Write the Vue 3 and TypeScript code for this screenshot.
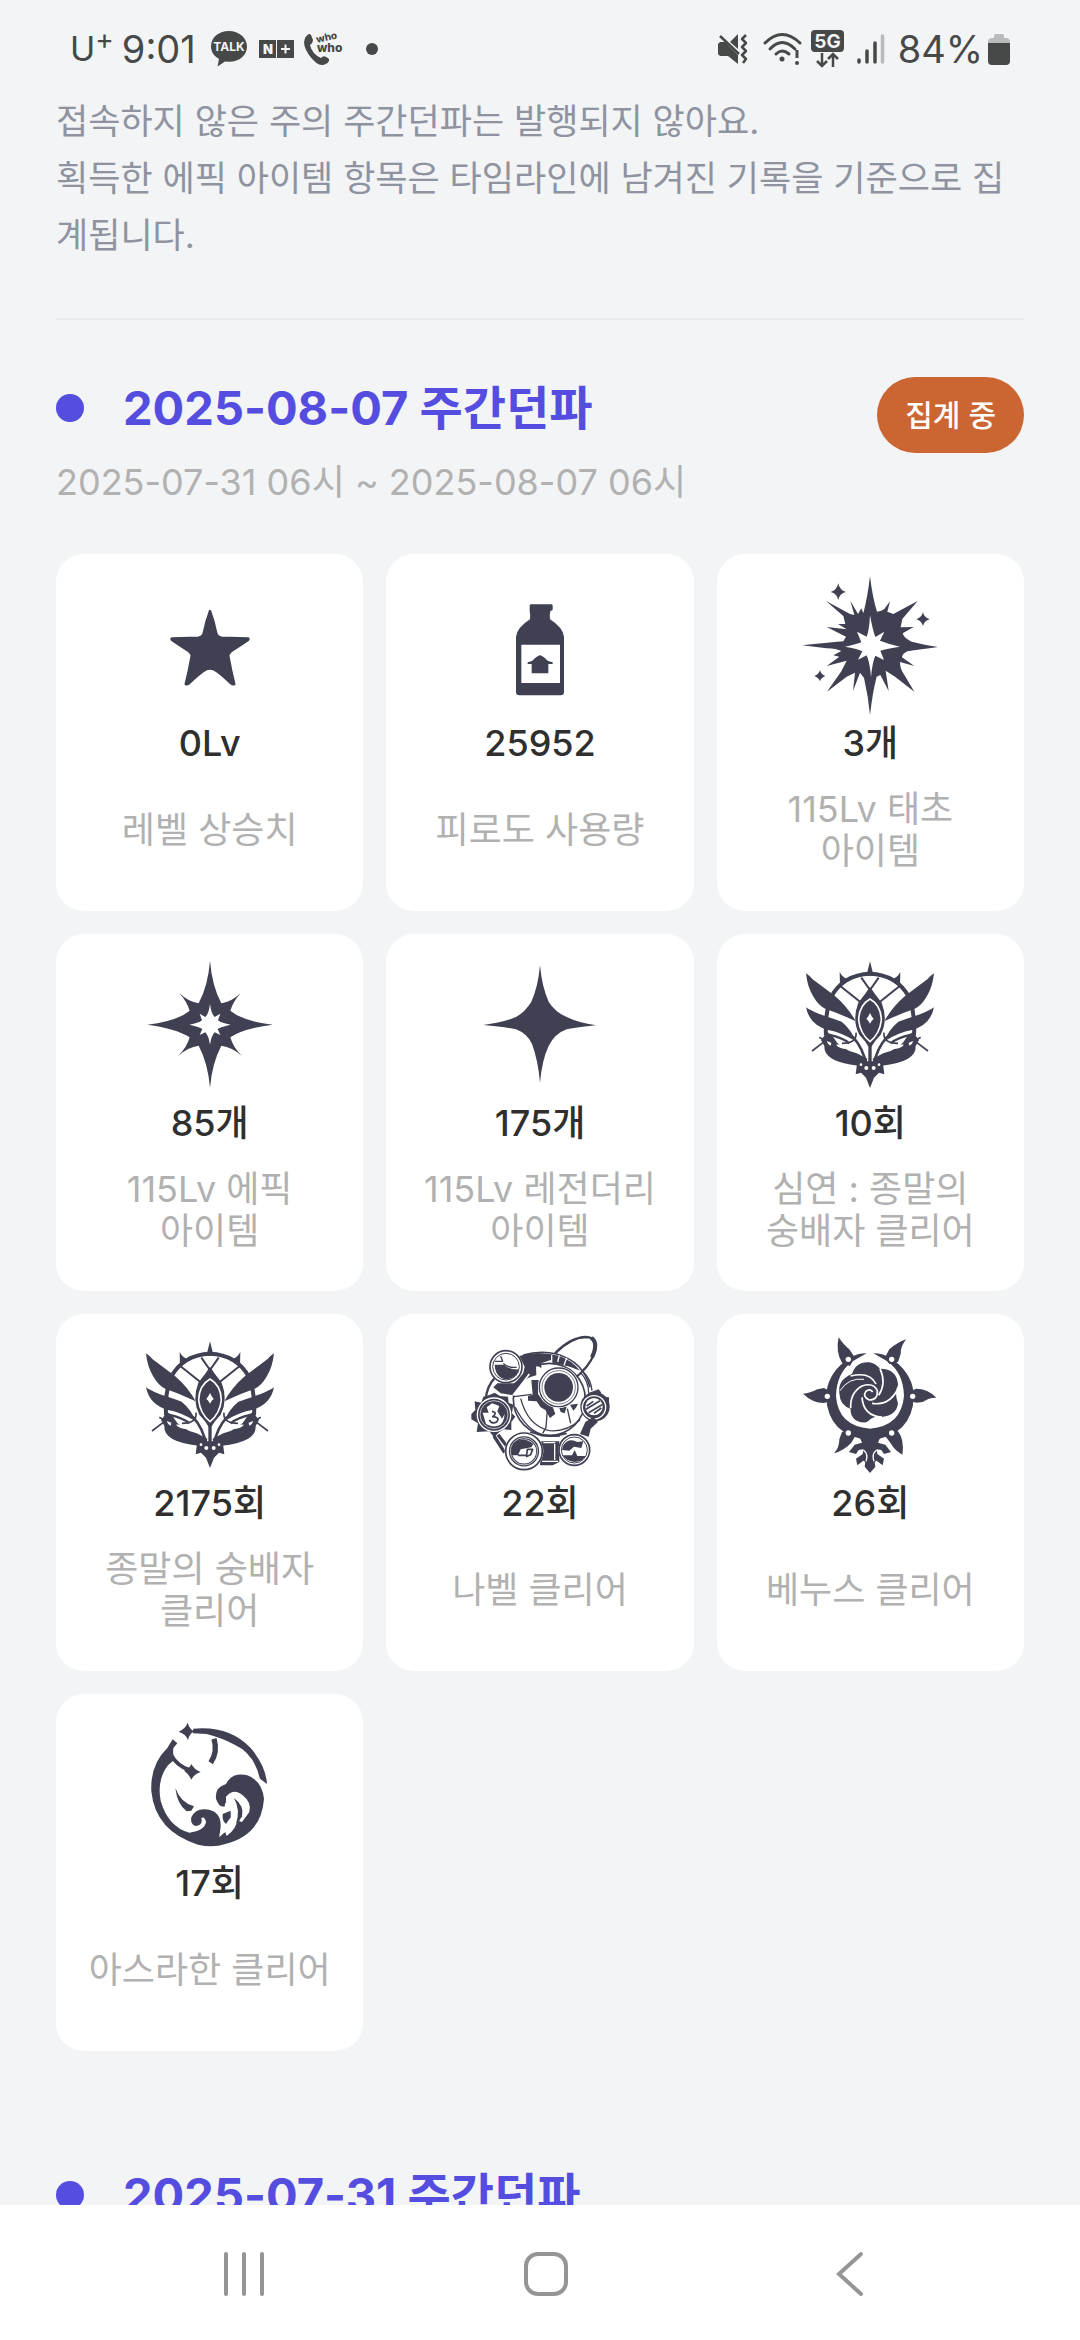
<script setup lang="ts">
interface Shape {
  d: string
  /** 'ink' fills dark, 'paper' fills white; strokes use the same two colours */
  fill?: 'ink' | 'paper'
  stroke?: 'ink' | 'paper'
  width?: number
  /** also draw the shape reflected over the vertical centre line */
  mirror?: boolean
}

interface Stat {
  value: string
  label: string[]
  icon: Shape[]
}

const circle = (x: number, y: number, r: number): string =>
  `M${x - r} ${y}a${r} ${r} 0 1 0 ${2 * r} 0a${r} ${r} 0 1 0 ${-2 * r} 0Z`

const ink = (d: string, mirror = false): Shape => ({ d, fill: 'ink', mirror })
const paper = (d: string, mirror = false): Shape => ({ d, fill: 'paper', mirror })
const line = (d: string, width: number, mirror = false): Shape => ({ d, stroke: 'ink', width, mirror })
const cut = (d: string, width: number, mirror = false): Shape => ({ d, stroke: 'paper', width, mirror })

const levelStar: Shape[] = [
  {
    d: 'M510 213Q522 245 528 276Q530 291 545 293L624 295Q628 297 623 301Q598 318 573 334Q563 342 566 352Q573 392 583 432Q579 435 573 430Q548 406 530 393Q510 379 490 393Q472 406 447 430Q441 435 437 432Q447 392 454 352Q457 342 447 334Q422 318 397 301Q392 297 396 295L475 293Q490 291 492 276Q498 245 510 213Z',
    fill: 'ink', stroke: 'ink', width: 7,
  },
]

const bottle: Shape[] = [
  ink('M479 197Q479 193 484 193H543Q548 193 548 197V209L541 214Q538 226 540 238Q578 262 582 290V456Q582 466 572 466H448Q438 466 438 456V290Q442 262 480 238Q482 226 479 214Z'),
  paper('M454 314H570V429H454Z'),
  ink('M510 345L522 352L534 363L548 367V372H535V400H485V372H473V367L486 363L498 352Z'),
]

const primeval: Shape[] = [
  ink('M510 108Q517 170 531 215Q545 214 553 207L570 184L562 215L580 222L653 183L607 237L602 262L641 261L608 280Q612 295 635 305Q675 315 714 321Q660 328 622 334Q606 342 606 352L643 378L600 366Q600 385 610 400L643 455L585 410L557 392L566 453L541 405L530 410Q518 455 510 525Q505 470 492 414L480 398L459 453L465 398L440 410L381 455L424 394L440 362L380 378L418 350L400 346L424 333Q410 326 380 325L306 316Q380 308 430 304L438 290L380 261L440 268L414 252L436 252L430 228L378 183L450 222L463 225L451 182L474 222L484 205L490 220Q503 170 510 108Z'),
  paper('M510 226Q518 270 526 291L553 275L540 302Q565 312 600 320Q560 326 541 332L552 360L526 347Q517 365 513 412Q510 370 500 346L474 359L487 334Q470 325 435 320Q470 313 484 307L471 275L500 290Q508 270 510 226Z'),
  ink('M415 130Q418 150 438 156Q418 161 415 180Q411 161 392 156Q411 150 415 130Z'),
  ink('M669 217Q672 232 689 238Q672 243 669 258Q665 243 649 238Q665 232 669 217Z'),
  ink('M360 391Q363 403 376 408Q363 413 360 424Q356 413 343 408Q356 403 360 391Z'),
]

const epic: Shape[] = [
  ink('M510 122Q516 197 544 250Q577 244 602 219Q578 247 571 272Q610 304 698 314Q610 326 571 352Q580 384 606 408Q576 381 544 377Q516 430 510 503Q504 430 476 377Q444 381 414 408Q440 384 449 352Q410 326 322 314Q410 304 449 272Q442 247 418 219Q443 244 476 250Q504 197 510 122Z'),
  paper('M510 251Q513 280 524 291L541 281L534 301Q545 310 572 314Q546 319 533 327L541 345L524 337Q514 347 510 374Q506 347 496 337L479 345L487 327Q474 319 448 314Q475 310 486 301L479 281L496 291Q507 280 510 251Z'),
]

const legendary: Shape[] = [
  ink('M510 136Q516 202 536 245Q554 275 590 291Q625 308 678 316Q620 322 590 328Q554 341 536 378Q516 420 510 488Q504 420 486 372Q472 341 438 328Q400 320 340 315Q400 308 438 291Q466 275 484 245Q504 202 510 136Z'),
]

const cultist: Shape[] = [
  line('M510 161Q590 164 627 231Q646 280 642 346', 12, true),
  ink('M510 124L521 167H499Z'),
  ink('M601 156L600 198L573 179Q592 174 601 156Z', true),
  line('M510 210L536 173', 6, true),
  line('M540 245L602 196', 6, true),
  ink('M702 160Q694 165 682 178L616 227Q575 262 553 304Q600 281 644 266Q664 258 681 228Q698 200 702 160Z', true),
  ink('M702 262Q692 270 660 283Q620 296 595 305Q565 330 553 364Q596 337 636 330Q692 314 702 262Z', true),
  ink('M510 200Q524 222 545 248Q565 300 542 344Q524 362 510 386Q496 362 478 344Q455 300 475 248Q496 222 510 200Z'),
  cut('M510 237Q543 256 544 300Q540 340 510 365Q480 340 476 300Q477 256 510 237Z', 5),
  paper('M510 279Q515 290 521 297Q515 301 510 311Q505 301 499 297Q505 290 510 279Z'),
  line('M552 338Q548 370 594 370', 5, true),
  line('M562 350Q530 385 521 436', 8, true),
  line('M510 375V430', 10),
  line('M572 370Q590 354 634 344', 7, true),
  ink('M638 336L657 360L647 378Q650 426 545 437L521 432L518 416L550 400Q602 387 620 352Z', true),
  paper('M576 387Q600 370 612 374Q600 388 576 387Z', true),
  paper('M626 368L640 363Q637 374 628 377Z', true),
  line('M640 365L662 352M646 364L684 393', 5, true),
  ink('M472 424H548L553 463L537 458L522 473L510 504L498 473L483 458L467 463Z'),
  paper(circle(521, 444, 6), true),
  paper(circle(537, 434, 4), true),
]

const nabel: Shape[] = [
  line('M555 160Q602 112 648 111Q688 113 674 158Q656 204 610 238', 7),
  line('M664 114Q686 128 666 172', 12),
  line('M460 165Q510 150 560 162Q640 185 660 262', 5),
  line('M376 232Q350 258 347 300', 7),
  ink('M448 168Q500 150 566 167Q605 180 630 212L600 200L548 188L542 180L514 190V204L498 196L499 226Q472 231 456 250L430 286L392 280L370 262L382 250H432L458 228L464 200Z'),
  cut('M568 166L563 186M590 173L582 196M545 166V185', 4),
  line(circle(538, 298, 108), 5),
  cut('M478 222Q450 260 430 284H520', 5),
  paper('M452 272Q460 240 486 234L484 282L440 286Z'),
  line('M452 296Q474 378 538 392Q590 396 630 360', 4),
  line('M432 290L485 283M436 322Q468 388 516 404', 4),
  line('M532 330L528 382L518 400M592 326L602 370', 4),
  ink('M484 240H506L504 282L520 303L548 320L556 342L540 354L526 330L512 322L500 304L474 302V288L488 284Z'),
  ink('M566 318L590 320L584 340L572 336ZM600 314L624 311L618 323L610 332Z'),
  paper(circle(566, 262, 62)),
  line(circle(566, 262, 58), 4),
  line(circle(566, 262, 50), 2),
  ink(circle(566, 262, 43)),
  line('M632 218Q656 244 656 280M640 216Q662 236 666 272', 4),
  ink(circle(675, 320, 44)),
  ink('M654 280L686 268L694 278L668 292ZM700 290L717 292V330L706 342Z'),
  cut(circle(672, 322, 35), 4),
  paper(circle(672, 320, 26)),
  line('M650 318L670 304M648 328L690 302M656 338L696 314M672 340L694 324', 5),
  ink('M670 350L684 366L662 386L656 410L630 402L646 366Z'),
  ink('M514 424H568V486L548 496H510Z'),
  cut('M516 484H564M554 432V480M520 428H556', 4),
  line('M500 402Q530 416 590 400M480 396Q520 410 570 408', 5),
  ink('M356 286L374 278L390 288L414 290L416 308L430 314L426 340L436 350L424 366V390L402 388L388 396L372 412L358 394L320 396L324 370L304 358V342L316 330L314 304L334 308L340 290Z'),
  cut(circle(372, 344, 50), 4),
  cut(circle(372, 344, 42), 2),
  paper('M338 338L356 338L350 322L366 310L388 318L382 334L396 356L404 342Q402 368 388 376Q368 384 348 372Z'),
  line('M366 334Q384 338 368 350Q392 352 380 366Q366 374 358 360', 5),
  line('M372 408L404 458M384 404L410 438', 10),
  paper(circle(408, 200, 50)),
  line(circle(408, 200, 48), 5),
  line(circle(408, 200, 40), 3),
  ink('M374 194H402Q420 210 446 208Q442 234 410 238Q376 234 374 194Z'),
  line('M374 184H398L392 168M400 190Q412 204 440 202', 4),
  paper(circle(462, 454, 58)),
  line(circle(462, 454, 55), 5),
  line(circle(462, 454, 41), 9),
  cut(circle(462, 454, 41), 2),
  ink('M430 430Q460 406 490 432L484 442L452 448L444 466H426Q420 446 430 430Z'),
  line('M444 466H470L472 448H488L482 464L468 470', 5),
  paper(circle(613, 450, 48)),
  line(circle(613, 450, 46), 5),
  line(circle(613, 450, 39), 3),
  ink('M580 436Q596 412 622 426L640 424L634 444L612 440L598 452L576 450ZM578 466H606L614 450L622 468H646Q640 484 614 486Q590 484 578 466Z'),
]

const venus: Shape[] = [
  ink('M500 160Q470 160 455 172L432 186Q382 226 378 288Q384 410 510 420Q636 410 642 288Q638 226 588 186L565 172Q550 160 520 160L562 184Q610 218 612 288Q604 378 510 386Q414 378 408 288Q410 218 458 184Z'),
  ink('M416 112Q432 136 448 148L464 172L450 198L426 188Q406 156 416 112Z'),
  ink('M619 118Q602 136 602 162L594 186L568 192L554 174L568 148Q590 128 619 118Z'),
  ink('M309 281Q330 280 352 268L372 264L394 276V302L372 309Q336 308 309 281Z'),
  ink('M709 293Q688 292 668 306L648 308L626 300V276L648 266Q684 266 709 293Z'),
  ink('M402 460Q418 444 418 418L426 396L452 390L468 404L454 428Q434 450 402 460Z'),
  ink('M607 464Q584 452 572 430L554 406L568 388L594 394Q614 420 607 464Z'),
  paper(circle(445, 178, 8), true),
  paper(circle(382, 289, 8), true),
  paper(circle(445, 399, 8), true),
  ink('M456 222Q468 184 508 187Q526 190 540 206Q592 206 594 256Q582 276 594 310Q590 346 546 351Q524 346 506 362Q492 374 466 360Q450 346 452 326Q420 318 418 280Q412 240 456 222Z'),
  cut('M452 324Q450 278 486 258Q520 246 532 272Q534 300 508 300Q486 290 498 274Q510 264 518 276', 5),
  cut('M452 228Q510 214 528 252', 5),
  cut('M540 206Q560 250 536 286', 5),
  cut('M592 270Q566 318 516 310', 5),
  cut('M546 351Q490 348 486 292', 5),
  cut('M420 272Q446 232 492 238', 3),
  ink('M510 400L540 414L534 428L556 434L573 456L552 462L544 450L530 448L532 462L552 476L548 496L530 482L524 486L526 500L510 519L494 500L496 486L490 482L472 496L468 476L488 462L490 448L476 450L468 462L447 456L464 434L486 428L480 414Z'),
  cut('M490 450Q506 462 498 484', 4, true),
]

const asrahan: Shape[] = [
  ink('M398 178L412 190L400 204Q398 224 402 240L384 256Q350 300 362 362Q384 440 448 458Q494 452 498 426Q494 408 484 414Q490 436 466 438Q450 432 454 412Q466 386 496 388Q544 392 542 440L538 472Q556 452 572 450Q590 424 604 398Q624 378 608 346Q582 322 558 350V378Q538 386 528 356Q524 322 558 312Q576 276 622 286Q666 302 672 356Q664 466 556 492Q520 504 474 494Q346 454 334 334Q330 254 382 204Z'),
  paper('M552 446L560 468Q590 446 596 410L590 398Q574 434 552 446Z'),
  paper('M608 346Q636 368 628 396L606 426L598 424Q610 386 600 362Z'),
  paper('M554 382Q554 356 578 360Q592 384 586 410Q572 442 538 466L546 440L540 406Z'),
  ink('M548 402L572 392L572 412L558 432Q546 424 548 402Z'),
  ink('M582 354Q614 378 606 410L588 432Q602 390 582 354Z'),
  ink('M460 146Q568 136 632 204Q678 258 681 312L660 296Q642 220 584 194Q546 174 500 162L458 160Z'),
  ink('M443 128Q448 146 462 154Q448 162 444 180Q438 162 416 155Q436 146 443 128Z'),
  line('M522 176Q534 216 512 248', 16),
  line('M394 226Q410 256 448 270', 12),
  ink('M454 252Q462 268 482 276Q462 282 454 299Q448 284 432 272Q448 268 454 252Z'),
  ink('M406 324Q422 368 462 379L454 392L440 394Q412 374 406 324Z'),
]

const stats: Stat[] = [
  { value: '0Lv', label: ['레벨 상승치'], icon: levelStar },
  { value: '25952', label: ['피로도 사용량'], icon: bottle },
  { value: '3개', label: ['115Lv 태초', '아이템'], icon: primeval },
  { value: '85개', label: ['115Lv 에픽', '아이템'], icon: epic },
  { value: '175개', label: ['115Lv 레전더리', '아이템'], icon: legendary },
  { value: '10회', label: ['심연 : 종말의', '숭배자 클리어'], icon: cultist },
  { value: '2175회', label: ['종말의 숭배자', '클리어'], icon: cultist },
  { value: '22회', label: ['나벨 클리어'], icon: nabel },
  { value: '26회', label: ['베누스 클리어'], icon: venus },
  { value: '17회', label: ['아스라한 클리어'], icon: asrahan },
]

const colour = (c?: 'ink' | 'paper'): string => (c === 'ink' ? '#3f4153' : c === 'paper' ? '#ffffff' : 'none')
</script>

<template>
  <div class="screen">
    <header class="status">
      <div class="status-group">
        <span class="carrier">U<sup>+</sup></span>
        <span class="status-text clock">9:01</span>
        <svg class="talk" width="38" height="38" viewBox="0 0 38 38" aria-label="TALK">
          <path d="M19 1C8 1 1 8 1 16.500C1 22 4 26 9 29L7.500 36.500L15 31.500C28 33.500 37 26 37 16.500C37 8 29 1 19 1Z" fill="#474848" />
          <text x="19" y="21" text-anchor="middle" font-size="12" font-weight="700" fill="#f2f4f6">TALK</text>
        </svg>
        <svg class="nplus" width="35" height="18" viewBox="0 0 35 18" aria-label="N+">
          <path d="M0 0H17V18H0ZM18 0H35V18H18Z" fill="#474848" />
          <text x="9" y="14" text-anchor="middle" font-size="13" font-weight="900" fill="#f2f4f6">N</text>
          <path d="M22 9H31M26.500 4.500V13.500" stroke="#f2f4f6" stroke-width="2" />
        </svg>
        <svg class="whowho" width="42" height="38" viewBox="0 0 42 38" aria-label="who who">
          <path d="M2 8Q6 2 8 5L10 10Q10 13 7 15Q9 24 18 28Q21 24 26 29Q27 33 20 35Q14 36 6 25Q-1 15 2 8Z" fill="#474848" />
          <text x="14" y="13" font-size="10" font-weight="800" fill="#474848" transform="rotate(-13 14 13)">who</text>
          <text x="14" y="22" font-size="12" font-weight="800" fill="#474848">who</text>
        </svg>
        <span class="more"></span>
      </div>
      <div class="status-group">
        <svg width="32" height="36" viewBox="0 0 32 36" aria-label="진동">
          <path d="M1 13L3 11H8L21 24V33L11 25H3L1 23ZM13 11L21 3V18Z" fill="#474848" />
          <path d="M3 5L22 23M29 4L25 8L29 12L25 16L29 20L25 24L29 28L26 32" fill="none" stroke="#474848" stroke-width="2.500" stroke-linejoin="round" />
        </svg>
        <svg class="wifi" width="39" height="36" viewBox="0 0 39 36" aria-label="Wi-Fi">
          <path d="M2 12Q19 -5 37 12M7 18Q19 5 32 18M13 23Q19 17 26 23" fill="none" stroke="#474848" stroke-width="3" stroke-linecap="round" />
          <circle cx="19" cy="28" r="2.500" fill="#474848" />
          <path d="M34 19V27" stroke="#474848" stroke-width="3" />
          <circle cx="34" cy="32" r="2" fill="#474848" />
        </svg>
        <svg class="fiveg" width="34" height="38" viewBox="0 0 34 38" aria-label="5G">
          <rect x="0" y="0" width="33" height="22" rx="4" fill="#474848" />
          <text x="16.500" y="18" text-anchor="middle" font-size="19" font-weight="700" fill="#f2f4f6">5G</text>
          <path d="M11 23V36M6 31L11 36L16 31M22 37V24M17 29L22 24L27 29" fill="none" stroke="#474848" stroke-width="2.500" />
        </svg>
        <svg class="signal" width="28" height="32" viewBox="0 0 28 32" aria-label="신호">
          <path d="M2 27V29M10 18V29M18 10V29" stroke="#474848" stroke-width="3.500" stroke-linecap="round" />
          <path d="M25.500 3V29" stroke="#b9babb" stroke-width="3.500" stroke-linecap="round" />
        </svg>
        <span class="status-text">84%</span>
        <svg class="battery" width="22" height="32" viewBox="0 0 22 32" aria-label="배터리">
          <path d="M6 3Q6 1 8 1H14Q16 1 16 3V5H18Q22 5 22 9V12H0V9Q0 5 4 5H6Z" fill="#b9babb" />
          <path d="M0 10H22V28Q22 32 18 32H4Q0 32 0 28Z" fill="#474848" />
        </svg>
      </div>
    </header>

    <main class="content">
      <p class="notice">
        접속하지 않은 주의 주간던파는 발행되지 않아요.<br />
        획득한 에픽 아이템 항목은 타임라인에 남겨진 기록을 기준으로 집<br />계됩니다.
      </p>
      <hr class="divider" />

      <section class="week">
        <div class="week-head">
          <div>
            <h2 class="week-title"><span class="bullet"></span>2025-08-07 주간던파</h2>
            <p class="period">2025-07-31 06시 ~ 2025-08-07 06시</p>
          </div>
          <span class="badge">집계 중</span>
        </div>

        <ul class="grid">
          <li v-for="stat in stats" :key="stat.label.join(' ')" class="card">
            <svg class="card-icon" viewBox="306 111 408 408" aria-hidden="true">
              <template v-for="(s, i) in stat.icon" :key="i">
                <path :d="s.d" :fill="colour(s.fill)" :stroke="colour(s.stroke)" :stroke-width="s.width" stroke-linejoin="round" />
                <path
                  v-if="s.mirror" :d="s.d" :fill="colour(s.fill)" :stroke="colour(s.stroke)"
                  :stroke-width="s.width" transform="matrix(-1 0 0 1 1020 0)"
                />
              </template>
            </svg>
            <strong class="value">{{ stat.value }}</strong>
            <span class="label"><span v-for="part in stat.label" :key="part">{{ part }}</span></span>
          </li>
        </ul>
      </section>

      <section class="week">
        <h2 class="week-title"><span class="bullet"></span>2025-07-31 주간던파</h2>
      </section>
    </main>

    <nav class="navbar">
      <button type="button" aria-label="최근 앱">
        <svg width="48" height="48" viewBox="0 0 48 48"><path d="M6 4V44M24 4V44M42 4V44" /></svg>
      </button>
      <button type="button" aria-label="홈">
        <svg width="48" height="48" viewBox="0 0 48 48"><rect x="4" y="4" width="40" height="40" rx="12" /></svg>
      </button>
      <button type="button" aria-label="뒤로">
        <svg width="48" height="48" viewBox="0 0 48 48"><path d="M36 4L14 24L36 44" /></svg>
      </button>
    </nav>
  </div>
</template>

<style>
body {
  margin: 0;
  background: #f2f4f6;
}
</style>

<style scoped>
.screen {
  display: flex;
  flex-direction: column;
  height: 100vh;
  overflow: hidden;
  background: #f2f4f6;
  font-family: Inter, "Noto Sans CJK KR", sans-serif;
}

.status {
  display: flex;
  flex: none;
  align-items: center;
  justify-content: space-between;
  box-sizing: border-box;
  height: 93px;
  padding: 4px 70px 0;
  color: #474848;
}

.status svg {
  overflow: visible;
}

.status-group {
  display: flex;
  align-items: center;
}

.status-text {
  font-size: 38px;
  line-height: 48px;
  font-weight: 400;
}

.carrier {
  font-size: 34px;
  line-height: 48px;
  font-weight: 400;
}

.carrier sup {
  font-size: 28px;
  line-height: 0;
}

.clock {
  margin: 0 14px 0 8px;
}

.nplus {
  margin: 0 9px 0 11px;
}

.more {
  width: 12px;
  height: 12px;
  margin-left: 21px;
  border-radius: 50%;
  background: #474848;
}

.wifi {
  margin-left: 14px;
}

.fiveg {
  margin: 0 12px 0 9px;
}

.signal {
  margin-right: 13px;
}

.battery {
  margin-left: 5px;
}

.content {
  flex: 1;
  min-height: 0;
  padding: 0 56px;
  overflow: hidden;
}

.notice {
  margin: 0;
  font-size: 35px;
  line-height: 57px;
  color: #8f93a0;
}

.divider {
  height: 2px;
  margin: 54px 0 57px;
  border: 0;
  background: #e7e9eb;
}

.week {
  margin-bottom: 113px;
}

.week-head {
  display: flex;
  align-items: flex-start;
  justify-content: space-between;
  margin-bottom: 49px;
}

.week-title {
  display: flex;
  align-items: center;
  gap: 39px;
  margin: 0;
  padding-top: 2px;
  font-size: 47px;
  line-height: 58px;
  font-weight: 700;
  color: #554de0;
}

.bullet {
  width: 28px;
  height: 28px;
  border-radius: 50%;
  background: #554de0;
}

.period {
  margin: 22px 0 0;
  font-size: 36px;
  line-height: 46px;
  color: #b1b1b1;
}

.badge {
  padding: 0 28px;
  border-radius: 38px;
  background: #cb6531;
  font-size: 30px;
  line-height: 76px;
  font-weight: 500;
  color: #fff;
}

.grid {
  display: grid;
  grid-template-columns: repeat(3, 1fr);
  gap: 23px;
  margin: 0;
  padding: 0;
  list-style: none;
}

.card {
  display: flex;
  flex-direction: column;
  align-items: center;
  padding: 23px 12px 39px;
  border-radius: 28px;
  background: #fff;
}

.card-icon {
  width: 136px;
  height: 136px;
  overflow: visible;
}

.value {
  font-size: 36px;
  line-height: 60px;
  font-weight: 500;
  color: #2f2f2f;
}

.label {
  display: flex;
  flex-direction: column;
  align-items: center;
  justify-content: center;
  min-height: 84px;
  margin-top: 15px;
  font-size: 36px;
  line-height: 42px;
  color: #b1b1b1;
  white-space: nowrap;
}

.navbar {
  display: flex;
  flex: none;
  align-items: center;
  height: 135px;
  padding: 2px 80px 0 93px;
  box-sizing: border-box;
  background: #fff;
}

.navbar button {
  display: flex;
  flex: 1;
  justify-content: center;
  padding: 0;
  border: 0;
  background: none;
}

.navbar svg {
  fill: none;
  stroke: #959595;
  stroke-width: 4;
  stroke-linecap: round;
}
</style>
